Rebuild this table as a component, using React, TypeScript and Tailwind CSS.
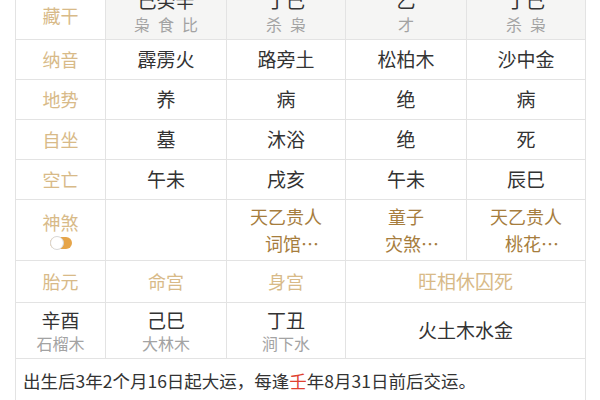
const label = 'text-[#d8ba88]'
const main = 'text-[#333]'
const sub = 'text-[#a3a3a3]'
const gold = 'text-[#a67d3d]'

const cols = ['w-[121px]', 'w-[119px]', 'w-[121px]', 'w-[119px]']

type SimpleRow = { name: string; cells: string[] }

const simpleRows: SimpleRow[] = [
  { name: '纳音', cells: ['霹雳火', '路旁土', '松柏木', '沙中金'] },
  { name: '地势', cells: ['养', '病', '绝', '病'] },
  { name: '自坐', cells: ['墓', '沐浴', '绝', '死'] },
  { name: '空亡', cells: ['午未', '戌亥', '午未', '辰巳'] },
]

const canggan = [
  { top: '己癸辛', bottom: ['枭', '食', '比'] },
  { top: '丁己', bottom: ['杀', '枭'] },
  { top: '乙', bottom: ['才'] },
  { top: '丁己', bottom: ['杀', '枭'] },
]

const shensha = [
  [],
  ['天乙贵人', '词馆…'],
  ['童子', '灾煞…'],
  ['天乙贵人', '桃花…'],
]

const palaces = [
  { top: '辛酉', bottom: '石榴木', w: 'w-[90px]' },
  { top: '己巳', bottom: '大林木', w: cols[0] },
  { top: '丁丑', bottom: '涧下水', w: cols[1] },
]

function Cell({ w, className = '', children }: { w: string; className?: string; children?: React.ReactNode }) {
  return (
    <div className={`${w} shrink-0 border-r border-[#e3e3e3] flex flex-col items-center justify-center ${className}`}>
      {children}
    </div>
  )
}

export default function App() {
  return (
    <div
      className="w-[600px] h-[400px] overflow-hidden bg-white"
      style={{ fontFamily: '"Noto Sans CJK SC", "Noto Sans", sans-serif' }}
    >
      <div className="ml-[15px] mt-[-16px] w-[571px] border-l border-[#e3e3e3]">
        {/* 藏干 */}
        <div className="flex h-[56px] border-b border-[#e3e3e3]">
          <Cell w="w-[90px]" className={`${label} text-[18px] pt-[8px]`}>
            藏干
          </Cell>
          {canggan.map((c, i) => (
            <Cell key={i} w={cols[i]} className="bg-[#f5f5f4]">
              <span className={`${main} text-[19px] leading-[24px]`}>{c.top}</span>
              <span className={`${sub} text-[16px] leading-[24px] flex gap-[8px]`}>
                {c.bottom.map((b, j) => (
                  <span key={j}>{b}</span>
                ))}
              </span>
            </Cell>
          ))}
        </div>

        {simpleRows.map((r) => (
          <div key={r.name} className="flex h-[40px] border-b border-[#e3e3e3]">
            <Cell w="w-[90px]" className={`${label} text-[18px]`}>
              {r.name}
            </Cell>
            {r.cells.map((c, i) => (
              <Cell key={i} w={cols[i]} className={`${main} text-[19px]`}>
                {c}
              </Cell>
            ))}
          </div>
        ))}

        {/* 神煞 */}
        <div className="flex h-[61px] border-b border-[#e3e3e3]">
          <Cell w="w-[90px]" className="gap-[4px]">
            <span className={`${label} text-[18px] leading-[22px]`}>神煞</span>
            <span className="relative block h-[12px] w-[22px] rounded-full bg-[#e6a54a]">
              <span className="absolute left-0 top-[-1px] h-[14px] w-[14px] rounded-full border border-[#d8d8d8] bg-white" />
            </span>
          </Cell>
          {shensha.map((lines, i) => (
            <Cell key={i} w={cols[i]} className={`${gold} text-[18px] leading-[27px]`}>
              {lines.map((l, j) => (
                <span key={j} className={j === 1 ? 'pl-[12px]' : ''}>
                  {l}
                </span>
              ))}
            </Cell>
          ))}
        </div>

        {/* 胎元 */}
        <div className="flex h-[42px] border-b border-[#e3e3e3]">
          <Cell w="w-[90px]" className={`${label} text-[18px]`}>胎元</Cell>
          <Cell w={cols[0]} className={`${label} text-[18px]`}>命宫</Cell>
          <Cell w={cols[1]} className={`${label} text-[18px]`}>身宫</Cell>
          <Cell w="w-[240px]" className={`${label} text-[19px]`}>旺相休囚死</Cell>
        </div>

        <div className="flex h-[56px] border-b border-[#e3e3e3]">
          {palaces.map((p) => (
            <Cell key={p.top} w={p.w}>
              <span className={`${main} text-[19px] leading-[25px]`}>{p.top}</span>
              <span className={`${sub} text-[16px] leading-[22px]`}>{p.bottom}</span>
            </Cell>
          ))}
          <Cell w="w-[240px]" className={`${main} text-[19px]`}>火土木水金</Cell>
        </div>

        <div className="flex h-[50px] border-r border-[#e3e3e3] items-start pt-[10px] pl-[7px]">
          <p className={`${main} text-[17.5px] leading-[24px] whitespace-nowrap`}>
            出生后3年2个月16日起大运，每逢<span className="text-[#e0412f]">壬</span>年8月31日前后交运。
          </p>
        </div>
      </div>
    </div>
  )
}
